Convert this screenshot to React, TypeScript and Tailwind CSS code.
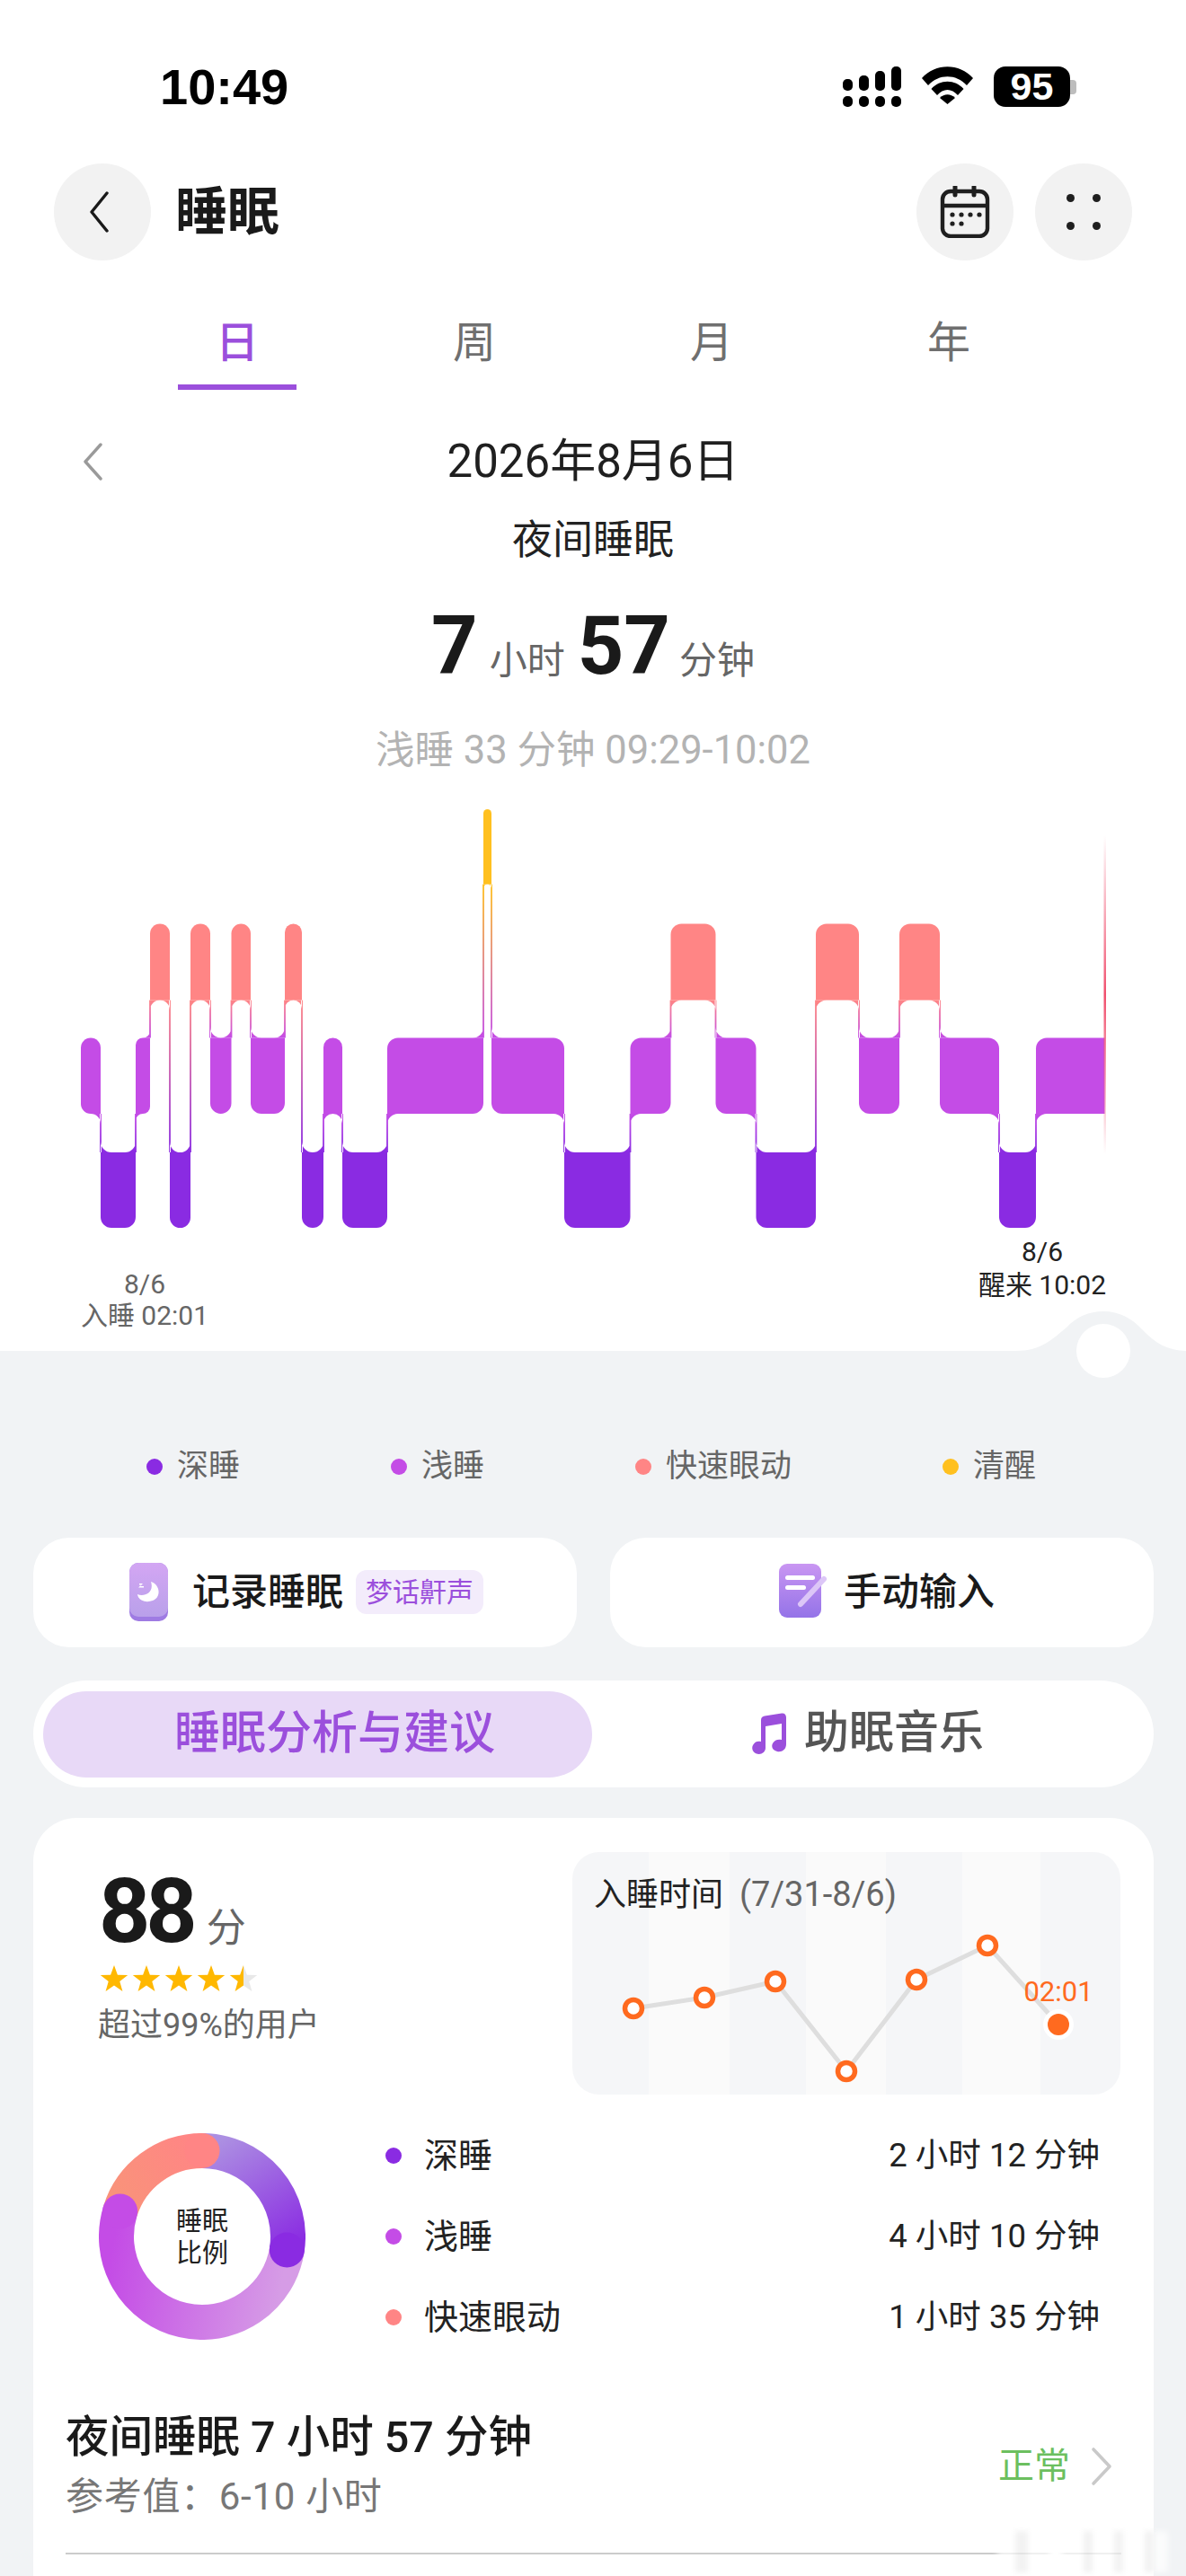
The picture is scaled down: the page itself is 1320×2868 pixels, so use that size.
import React from 'react';

const COLORS: Record<string, string> = {
  awake: '#ffc01f',
  rem: '#ff8585',
  light: '#c44ce6',
  deep: '#8a2be2',
};

const LEVELS: Record<string, [number, number]> = {
  awake: [901, 984.5],
  rem: [1028.5, 1113.5],
  light: [1155.5, 1240],
  deep: [1283, 1367],
};

type Seg = { x0: number; x1: number; stage: string };

const s = (x0: number, x1: number, stage: string): Seg => ({ x0, x1, stage });

const segments: Seg[] = [
  s(90, 112, 'light'),
  s(112, 151, 'deep'),
  s(151, 167, 'light'),
  s(167, 189, 'rem'),
  s(189, 212, 'deep'),
  s(212, 234, 'rem'),
  s(234, 257.5, 'light'),
  s(257.5, 279, 'rem'),
  s(279, 317, 'light'),
  s(317, 336, 'rem'),
  s(336, 360, 'deep'),
  s(360, 381, 'light'),
  s(381, 431, 'deep'),
  s(431, 538, 'light'),
  s(538, 547, 'awake'),
  s(547, 628, 'light'),
  s(628, 701.5, 'deep'),
  s(701.5, 746.5, 'light'),
  s(746.5, 796.5, 'rem'),
  s(796.5, 841.5, 'light'),
  s(841.5, 908, 'deep'),
  s(908, 956, 'rem'),
  s(956, 1001, 'light'),
  s(1001, 1046, 'rem'),
  s(1046, 1112, 'light'),
  s(1112, 1153, 'deep'),
  s(1153, 1229.5, 'light'),
];

const isAbove = (a: Seg, b: Seg) => LEVELS[a.stage][0] < LEVELS[b.stage][0];

// rounded rect with a separate radius per corner (tl, tr, br, bl)
const barPath = (seg: Seg, i: number) => {
  const [top, bottom] = LEVELS[seg.stage];
  const prev = segments[i - 1];
  const next = segments[i + 1];
  const w = seg.x1 - seg.x0;
  const r = Math.min(12, w / 2);
  const tl = prev && isAbove(prev, seg) ? 0 : r;
  const bl = prev && !isAbove(prev, seg) ? 0 : r;
  const tr = !next || isAbove(next, seg) ? 0 : r;
  const br = !next || !isAbove(next, seg) ? 0 : r;
  return [
    `M${seg.x0 + tl} ${top}`,
    `L${seg.x1 - tr} ${top}`,
    `A${tr} ${tr} 0 0 1 ${seg.x1} ${top + tr}`,
    `L${seg.x1} ${bottom - br}`,
    `A${br} ${br} 0 0 1 ${seg.x1 - br} ${bottom}`,
    `L${seg.x0 + bl} ${bottom}`,
    `A${bl} ${bl} 0 0 1 ${seg.x0} ${bottom - bl}`,
    `L${seg.x0} ${top + tl}`,
    `A${tl} ${tl} 0 0 1 ${seg.x0 + tl} ${top}`,
    'Z',
  ].join(' ');
};

const connectors = segments.slice(0, -1).map((a, i) => {
  const b = segments[i + 1];
  const upper = isAbove(a, b) ? a : b;
  const lower = isAbove(a, b) ? b : a;
  const dir = upper === a ? -1 : 1;
  const sweep = dir === 1 ? 0 : 1;
  const x = a.x1;
  const ub = LEVELS[upper.stage][1];
  const lt = LEVELS[lower.stage][0];
  const ru = Math.min(12, (upper.x1 - upper.x0) / 2);
  const rl = Math.min(12, (lower.x1 - lower.x0) / 2);
  const d = [
    `M${x + dir * ru} ${ub} A${ru} ${ru} 0 0 ${sweep} ${x} ${ub + ru} L${x} ${ub} Z`,
    `M${x - dir * rl} ${lt} A${rl} ${rl} 0 0 ${sweep} ${x} ${lt - rl} L${x} ${lt} Z`,
    `M${x - 0.9} ${ub} L${x + 0.9} ${ub} L${x + 0.9} ${lt} L${x - 0.9} ${lt} Z`,
  ].join(' ');
  return { id: `link-${i}`, d, ub, lt, from: COLORS[upper.stage], to: COLORS[lower.stage] };
});

const SleepChart = () => (
  <svg viewBox="0 880 1320 500" className="block w-[1320px] h-[500px]">
    <defs>
      {connectors.map(c => (
        <linearGradient key={c.id} id={c.id} gradientUnits="userSpaceOnUse" x1="0" x2="0" y1={c.ub} y2={c.lt}>
          <stop offset="0" stopColor={c.from} />
          <stop offset="1" stopColor={c.to} />
        </linearGradient>
      ))}
      <linearGradient id="wake-line" gradientUnits="userSpaceOnUse" x1="0" x2="0" y1="930" y2="1285">
        <stop offset="0" stopColor="#f0506e" stopOpacity="0" />
        <stop offset="0.5" stopColor="#f0506e" />
        <stop offset="1" stopColor="#f0506e" stopOpacity="0" />
      </linearGradient>
    </defs>
    {segments.map((seg, i) => (
      <path key={i} d={barPath(seg, i)} fill={COLORS[seg.stage]} />
    ))}
    {connectors.map(c => (
      <path key={c.id} d={c.d} fill={`url(#${c.id})`} />
    ))}
    <rect x="1228.5" y="930" width="2.5" height="355" fill="url(#wake-line)" />
  </svg>
);

const polar = (deg: number, r = 95.5) => {
  const a = ((deg - 90) * Math.PI) / 180;
  return [115 + r * Math.cos(a), 115 + r * Math.sin(a)];
};

const arc = (from: number, to: number) => {
  const [x0, y0] = polar(from);
  const [x1, y1] = polar(to);
  return `M${x0} ${y0} A95.5 95.5 0 ${to - from > 180 ? 1 : 0} 1 ${x1} ${y1}`;
};

const Donut = () => {
  const deepEnd = polar(99);
  const lightEnd = polar(287);
  const remEnd = polar(360);
  return (
    <div className="relative w-[230px] h-[230px] shrink-0">
      <svg viewBox="0 0 230 230" className="w-[230px] h-[230px]">
        <defs>
          <linearGradient id="d-deep" gradientUnits="userSpaceOnUse" x1="125" y1="15" x2="205" y2="135">
            <stop offset="0" stopColor="#ac8fe2" />
            <stop offset="1" stopColor="#8a2be2" />
          </linearGradient>
          <linearGradient id="d-light" gradientUnits="userSpaceOnUse" x1="210" y1="135" x2="20" y2="100">
            <stop offset="0" stopColor="#d69ce6" />
            <stop offset="1" stopColor="#c44ce6" />
          </linearGradient>
          <linearGradient id="d-rem" gradientUnits="userSpaceOnUse" x1="25" y1="80" x2="115" y2="20">
            <stop offset="0" stopColor="#f9937a" />
            <stop offset="1" stopColor="#ff8585" />
          </linearGradient>
        </defs>
        <path d={arc(0, 99)} fill="none" stroke="url(#d-deep)" strokeWidth="39" />
        <path d={arc(99, 287)} fill="none" stroke="url(#d-light)" strokeWidth="39" />
        <path d={arc(287, 360)} fill="none" stroke="url(#d-rem)" strokeWidth="39" />
        <circle cx={deepEnd[0]} cy={deepEnd[1]} r="19.5" fill="#8a2be2" />
        <circle cx={lightEnd[0]} cy={lightEnd[1]} r="19.5" fill="#c44ce6" />
        <circle cx={remEnd[0]} cy={remEnd[1]} r="19.5" fill="#ff8585" />
      </svg>
      <div className="absolute inset-0 pt-[2px] flex flex-col items-center justify-center text-[29px] leading-[36px] text-[#222]">
        <span>睡眠</span>
        <span>比例</span>
      </div>
    </div>
  );
};

const starPoints = (cx: number) => {
  const pts: string[] = [];
  for (let i = 0; i < 10; i++) {
    const r = i % 2 === 0 ? 16 : 6.6;
    const a = ((i * 36 - 90) * Math.PI) / 180;
    pts.push(`${cx + r * Math.cos(a)},${16 + r * Math.sin(a)}`);
  }
  return pts.join(' ');
};

const Stars = () => (
  <svg viewBox="0 0 180 32" className="block w-[180px] h-[32px]">
    <defs>
      <linearGradient id="half-star" gradientUnits="userSpaceOnUse" x1="0" x2="180" y1="0" y2="0">
        <stop offset="0.89" stopColor="#ffb800" />
        <stop offset="0.89" stopColor="#e8e8e8" />
      </linearGradient>
    </defs>
    {[16, 52, 88, 124].map(cx => (
      <polygon key={cx} points={starPoints(cx)} fill="#ffb800" />
    ))}
    <polygon points={starPoints(160)} fill="url(#half-star)" />
  </svg>
);

const bedtimePoints = [
  [68, 110],
  [147, 98],
  [226, 80],
  [305, 180],
  [383, 78],
  [462, 40],
];

const BedtimePanel = () => (
  <div className="w-[610px] h-[270px] rounded-[30px] overflow-hidden pt-[31px] bg-[linear-gradient(90deg,#f5f6f8_85px,#fafafa_85px,#fafafa_175px,#f5f6f8_175px,#f5f6f8_260px,#fafafa_260px,#fafafa_349px,#f5f6f8_349px,#f5f6f8_434px,#fafafa_434px,#fafafa_521px,#f5f6f8_521px)]">
    <div className="pl-[24px] text-[36px] leading-[33px] h-[33px]">
      <span className="text-[#222]">入睡时间</span>
      <span className="text-[#666] ml-[18px] text-[38px]">(7/31-8/6)</span>
    </div>
    <svg viewBox="0 0 610 206" className="block w-[610px] h-[206px]">
      <polyline
        points={[...bedtimePoints, [541, 128]].map(p => p.join(',')).join(' ')}
        fill="none"
        stroke="#dedede"
        strokeWidth="5"
      />
      {bedtimePoints.map(([x, y]) => (
        <circle key={x} cx={x} cy={y} r="9.5" fill="#fff" stroke="#ff6a1f" strokeWidth="5.5" />
      ))}
      <circle cx="541" cy="128" r="17" fill="#fff" />
      <circle cx="541" cy="128" r="12" fill="#ff6a1f" />
      <text x="541" y="102" textAnchor="middle" fontSize="31" fill="#ff6a1f">02:01</text>
    </svg>
  </div>
);

const MoonCardIcon = () => (
  <svg viewBox="0 0 43 65" className="w-[43px] h-[65px] shrink-0">
    <defs>
      <linearGradient id="moon-card" x1="0" x2="0" y1="0" y2="1">
        <stop offset="0" stopColor="#d3a6f3" />
        <stop offset="1" stopColor="#b9a0ea" />
      </linearGradient>
    </defs>
    <rect width="43" height="65" rx="10" fill="#9f7be3" />
    <rect x="0" y="0" width="43" height="60" rx="10" fill="url(#moon-card)" />
    <path d="M24 21 C34 24 36 38 26 42 C18 45 10 42 9 35 C16 38 28 34 24 21 Z" fill="#fff" />
    <path d="M11 23 h4 l-3 3 h4 v1.5 h-6 l3-3 h-2 Z" fill="#fff" />
  </svg>
);

const NoteCardIcon = () => (
  <svg viewBox="0 0 54 62" className="w-[54px] h-[62px] shrink-0">
    <defs>
      <linearGradient id="note-card" x1="0" x2="0" y1="0" y2="1">
        <stop offset="0" stopColor="#c996f2" />
        <stop offset="1" stopColor="#9473e8" />
      </linearGradient>
    </defs>
    <rect width="47" height="60" rx="9" fill="url(#note-card)" />
    <rect x="7" y="13" width="33" height="5" rx="2.5" fill="#fff" />
    <rect x="7" y="24" width="23" height="5" rx="2.5" fill="#fff" />
    <path d="M24 45 L50 17" stroke="#dcc6f7" strokeWidth="6" strokeLinecap="round" />
  </svg>
);

const legend = [
  { label: '深睡', color: 'bg-[#8a2be2]' },
  { label: '浅睡', color: 'bg-[#c44ce6]' },
  { label: '快速眼动', color: 'bg-[#ff8585]' },
  { label: '清醒', color: 'bg-[#ffc01f]' },
];

const stageRows = [
  { label: '深睡', value: '2 小时 12 分钟', color: 'bg-[#8a2be2]' },
  { label: '浅睡', value: '4 小时 10 分钟', color: 'bg-[#c44ce6]' },
  { label: '快速眼动', value: '1 小时 35 分钟', color: 'bg-[#ff8585]' },
];

const App: React.FC = () => {
  return (
    <div className="relative w-[1320px] h-[2868px] overflow-hidden bg-[#f1f3f5] font-['Roboto','Noto_Sans_CJK_SC',sans-serif]">
      <div className="h-[1504px] bg-white">
        {/* status bar */}
        <div className="h-[181px] flex items-start justify-between pt-[70px] pl-[178px] pr-[122px]">
          <span className="font-['Liberation_Sans',sans-serif] text-[56px] leading-[54px] font-bold text-black">10:49</span>
          <div className="flex items-start pt-[4px] gap-[23px]">
            <svg viewBox="0 0 65 45" className="w-[65px] h-[45px]">
              <rect x="0" y="14" width="11" height="13" rx="5" />
              <rect x="18" y="10" width="11" height="17" rx="5" />
              <rect x="36" y="5" width="11" height="22" rx="5" />
              <rect x="54" y="0" width="11" height="27" rx="5" />
              <rect x="0" y="33" width="11" height="12" rx="5" />
              <rect x="18" y="33" width="11" height="12" rx="5" />
              <rect x="36" y="33" width="11" height="12" rx="5" />
              <rect x="54" y="33" width="11" height="12" rx="5" />
            </svg>
            <svg viewBox="0 0 57 42" className="w-[57px] h-[42px]">
              <path d="M0 13 C15 -4 42 -4 57 13 L50 21 C38 8 19 8 7 21 Z" />
              <path d="M10.5 25 C20 14 37 14 46.5 25 L40 32 C33 24 24 24 17 32 Z" />
              <path d="M20 35 C25 30 32 30 37 35 L28.5 42 Z" />
            </svg>
            <div className="flex items-center">
              <div className="w-[85px] h-[45px] rounded-[13px] bg-black flex items-center justify-center font-['Liberation_Sans',sans-serif] text-[43px] font-bold text-white">
                95
              </div>
              <div className="w-[7px] h-[16px] rounded-r-[4px] bg-[#bdbdbd]" />
            </div>
          </div>
        </div>

        {/* header */}
        <div className="h-[110px] flex items-center pl-[60px] pr-[60px]">
          <div className="w-[108px] h-[108px] rounded-full bg-[#f2f2f2] flex items-center justify-center pr-[8px]">
            <svg viewBox="0 0 30 50" className="w-[30px] h-[50px]" fill="none" stroke="#1a1a1a" strokeWidth="3.4" strokeLinecap="round" strokeLinejoin="round">
              <path d="M24 4 L7 25 L24 46" />
            </svg>
          </div>
          <h1 className="ml-[27px] text-[58px] leading-none font-bold text-[#1a1a1a]">睡眠</h1>
          <div className="ml-auto flex gap-[24px]">
            <div className="w-[108px] h-[108px] rounded-full bg-[#f2f2f2] flex items-center justify-center">
              <svg viewBox="0 0 56 58" className="w-[56px] h-[58px]" fill="none" stroke="#1f1f1f" strokeWidth="4.4">
                <rect x="3" y="6" width="50" height="50" rx="9" />
                <path d="M3 22 H53" />
                <path d="M17 1 V10 M38 1 V10" strokeLinecap="round" strokeWidth="5" />
                <g fill="#1f1f1f" stroke="none">
                  <circle cx="14" cy="32" r="2.6" />
                  <circle cx="24" cy="32" r="2.6" />
                  <circle cx="34" cy="32" r="2.6" />
                  <circle cx="44" cy="32" r="2.6" />
                  <circle cx="14" cy="42" r="2.6" />
                  <circle cx="24" cy="42" r="2.6" />
                </g>
              </svg>
            </div>
            <div className="w-[108px] h-[108px] rounded-full bg-[#f2f2f2] grid grid-cols-[9px_9px] grid-rows-[9px_9px] justify-between content-between px-[35px] py-[34px]">
              <span className="w-[9px] h-[9px] rounded-full bg-[#1f1f1f]" />
              <span className="w-[9px] h-[9px] rounded-full bg-[#1f1f1f]" />
              <span className="w-[9px] h-[9px] rounded-full bg-[#1f1f1f]" />
              <span className="w-[9px] h-[9px] rounded-full bg-[#1f1f1f]" />
            </div>
          </div>
        </div>

        {/* day / week / month / year */}
        <div className="mt-[60px] mx-[132px] grid grid-cols-4">
          {['日', '周', '月', '年'].map((t, i) => (
            <div key={t} className="flex flex-col items-center">
              <span className={`h-[62px] text-[48px] leading-[62px] ${i === 0 ? 'text-[#9b4fdc] font-medium' : 'text-[#6f6f6f]'}`}>{t}</span>
              <span className={`mt-[15px] w-[132px] h-[6px] ${i === 0 ? 'bg-[#9b4fdc]' : ''}`} />
            </div>
          ))}
        </div>

        {/* date and total */}
        <div className="mt-[49px] h-[62px] grid grid-cols-[1fr_auto_1fr] items-center">
          <div className="pl-[90px]">
            <svg viewBox="0 0 26 44" className="w-[26px] h-[44px]" fill="none" stroke="#9a9a9a" strokeWidth="3.4" strokeLinecap="round" strokeLinejoin="round">
              <path d="M22 3 L5 22 L22 41" />
            </svg>
          </div>
          <span className="text-[51px] leading-[62px] text-[#1f1f1f]">2026年8月6日</span>
        </div>
        <div className="mt-[27px] h-[60px] text-center text-[45px] leading-[60px] text-[#222]">夜间睡眠</div>
        <div className="mt-[38px] h-[100px] flex items-baseline justify-center text-[#222] leading-[100px]">
          <span className="text-[90px] font-bold text-[#1a1a1a]">7</span>
          <span className="ml-[13px] text-[42px] text-[#666]">小时</span>
          <span className="ml-[14px] text-[90px] font-bold text-[#1a1a1a]">57</span>
          <span className="ml-[10px] text-[42px] text-[#666]">分钟</span>
        </div>
        <div className="mt-[36px] h-[60px] text-center text-[43.5px] leading-[60px] text-[#b3b3b3]">浅睡 33 分钟 09:29-10:02</div>

        {/* chart */}
        <div className="relative mt-[14px] h-[639px]">
          <SleepChart />
          <div className="absolute left-[61px] top-[532px] w-[200px] text-center text-[30px] leading-[35px] text-[#666]">
            <div>8/6</div>
            <div>入睡 02:01</div>
          </div>
          <div className="absolute left-[1060px] top-[495px] w-[200px] text-center text-[30px] leading-[37px] text-[#222]">
            <div>8/6</div>
            <div>醒来 10:02</div>
          </div>
          <svg viewBox="1120 1450 200 90" className="absolute left-[1120px] top-[570px] w-[200px] h-[90px]">
            <path d="M1130 1504 C1160 1504 1172 1490 1187 1478 C1198 1466 1212 1460 1228 1460 C1246 1460 1260 1468 1271 1480 C1285 1495 1300 1504 1320 1504 L1320 1506 L1130 1506 Z" fill="#f1f3f5" />
            <circle cx="1228" cy="1504" r="30" fill="#fff" />
          </svg>
        </div>
      </div>

      {/* legend */}
      <div className="mt-[104px] h-[50px] pl-[163px] flex items-center gap-[168px]">
        {legend.map(item => (
          <div key={item.label} className="flex items-center gap-[16px]">
            <span className={`w-[18px] h-[18px] rounded-full ${item.color}`} />
            <span className="text-[35px] leading-[50px] text-[#666]">{item.label}</span>
          </div>
        ))}
      </div>

      {/* actions */}
      <div className="mt-[54px] ml-[37px] mr-[36px] grid grid-cols-2 gap-[37px]">
        <div className="h-[122px] rounded-[40px] bg-white flex items-center pl-[107px] pb-[2px]">
          <MoonCardIcon />
          <span className="ml-[27px] text-[42px] font-medium text-[#1a1a1a]">记录睡眠</span>
          <span className="ml-[14px] w-[142px] h-[49px] rounded-[12px] bg-[#f3ecfb] flex items-center justify-center text-[30px] text-[#9b4fdc]">梦话鼾声</span>
        </div>
        <div className="h-[122px] rounded-[40px] bg-white flex items-center pl-[188px] pb-[2px]">
          <NoteCardIcon />
          <span className="ml-[18px] text-[42px] font-medium text-[#1a1a1a]">手动输入</span>
        </div>
      </div>

      {/* section tabs */}
      <div className="mt-[37px] ml-[37px] mr-[36px] h-[119px] rounded-full bg-white p-[11px] flex items-center">
        <div className="w-[611px] h-[96px] rounded-full bg-[#e8d9f7] flex items-center justify-center pl-[38px] text-[51px] font-medium text-[#9b4fdc]">睡眠分析与建议</div>
        <div className="flex-1 flex items-center justify-center pb-[2px]">
          <svg viewBox="0 0 38 46" className="w-[38px] h-[46px]">
            <path fill="#9b4fdc" d="M10 8 C10 5 12 4 14 3.5 L33 0.5 C36 0 38 2 38 5 V35 C38 41 33 44 28 43 C23 42 21 38 23 34 C25 30 29 29 33 30 V12 L15 15 V39 C15 44 10 47 5 45.5 C1 44 -1 40 1 36 C3 32 6 31 10 32 Z" />
          </svg>
          <span className="ml-[20px] text-[50px] font-medium text-[#555]">助眠音乐</span>
        </div>
      </div>

      {/* report card */}
      <div className="mt-[34px] ml-[37px] mr-[36px] h-[900px] rounded-t-[48px] bg-white pt-[38px]">
        <div className="flex justify-between pl-[73px] pr-[37px]">
          <div className="pt-[20px]">
            <div className="h-[92px] flex items-baseline leading-[92px]">
              <span className="text-[100px] font-bold text-[#1a1a1a] tracking-[-5px]">88</span>
              <span className="ml-[15px] text-[44px] text-[#666]">分</span>
            </div>
            <div className="mt-[14px] ml-[1px]">
              <Stars />
            </div>
            <div className="mt-[12px] -ml-[1px] text-[36px] leading-[46px] text-[#666]">超过99%的用户</div>
          </div>
          <BedtimePanel />
        </div>

        <div className="mt-[43px] pl-[73px] pr-[60px] flex">
          <Donut />
          <div className="ml-[89px] flex-1 flex flex-col justify-center gap-[30px] h-[230px]">
            {stageRows.map(row => (
              <div key={row.label} className="h-[60px] shrink-0 flex items-center">
                <span className={`w-[18px] h-[18px] rounded-full ${row.color}`} />
                <span className="ml-[25px] text-[38px] text-[#222]">{row.label}</span>
                <span className="ml-auto text-[36.5px] text-[#222]">{row.value}</span>
              </div>
            ))}
          </div>
        </div>

        <div className="mt-[79px] pl-[36px] pr-[46px] flex items-center justify-between">
          <div>
            <div className="h-[60px] text-[48.5px] leading-[60px] font-medium text-[#1a1a1a]">夜间睡眠 7 小时 57 分钟</div>
            <div className="mt-[8px] h-[56px] text-[42px] leading-[56px] tracking-[0.7px] text-[#777]">参考值：6-10 小时</div>
          </div>
          <div className="flex items-center gap-[23px]">
            <span className="text-[40px] text-[#6cbf5f]">正常</span>
            <svg viewBox="0 0 24 44" className="w-[24px] h-[44px]" fill="none" stroke="#c9c9c9" strokeWidth="3.6" strokeLinecap="round" strokeLinejoin="round">
              <path d="M3 3 L21 22 L3 41" />
            </svg>
          </div>
        </div>
        <div className="mt-[34px] mx-[36px] h-[2px] bg-[#cccccc]" />
      </div>

      {/* faint watermark over the bottom edge */}
      <div className="absolute left-[1110px] top-[2818px] w-[190px] h-[46px] flex items-stretch gap-[24px] pl-[20px] bg-white/70 blur-[3px]">
        <span className="w-[14px] bg-black/5" />
        <span className="w-[14px] bg-white" />
        <span className="w-[10px] bg-black/5" />
        <span className="w-[10px] bg-black/5" />
        <span className="w-[10px] bg-black/5" />
      </div>
    </div>
  );
};

export default App;
